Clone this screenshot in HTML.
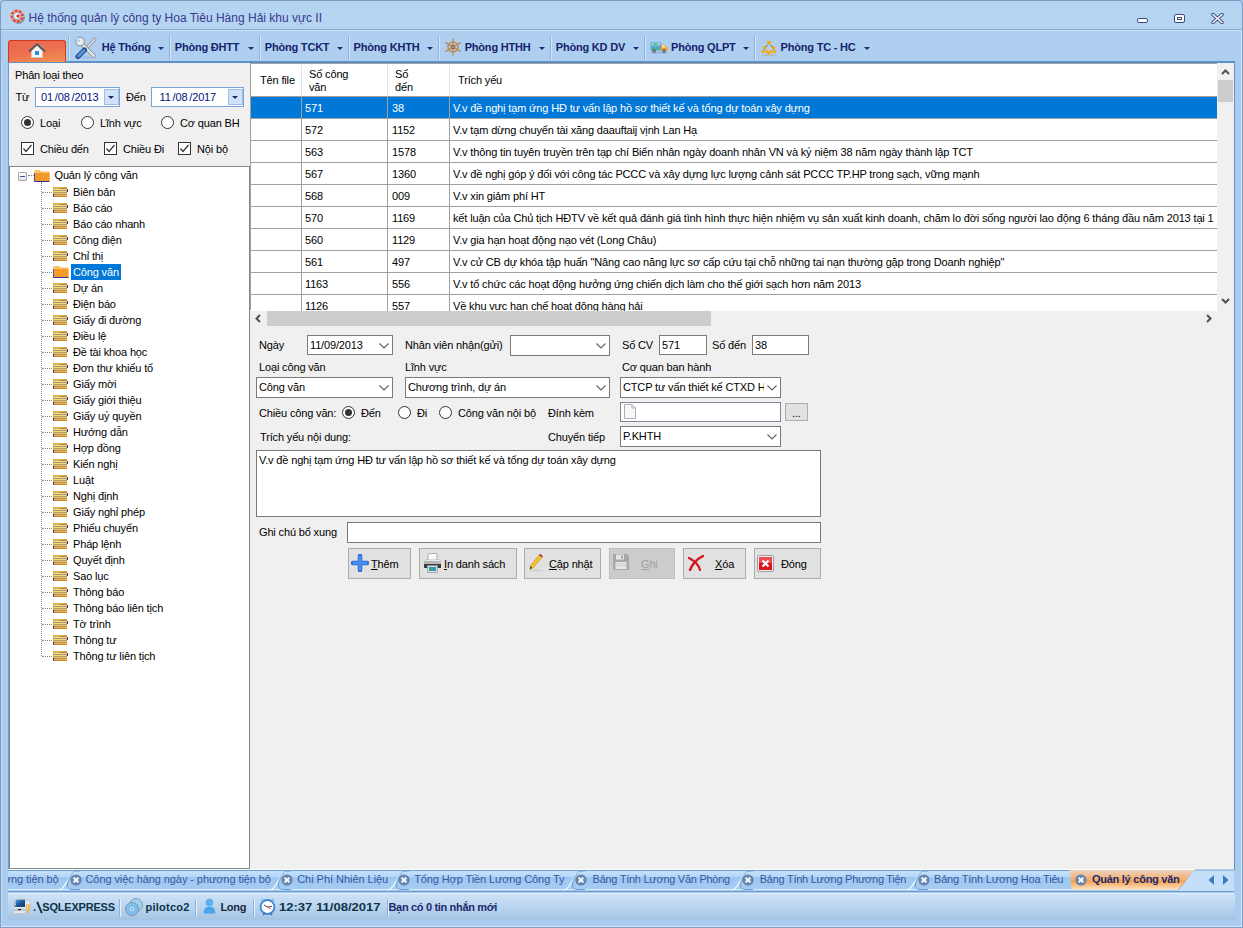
<!DOCTYPE html><html><head><meta charset="utf-8"><style>
*{box-sizing:border-box;margin:0;padding:0}
html,body{width:1243px;height:928px;overflow:hidden}
body{position:relative;background:#aacdef;font-family:"Liberation Sans",sans-serif;font-size:11px;color:#000}
.a{position:absolute}
.t{position:absolute;white-space:nowrap;line-height:14px;letter-spacing:-0.15px}
.mi{position:absolute;top:40px;font-weight:bold;font-size:11px;color:#17236c;line-height:14px;letter-spacing:-0.2px;white-space:nowrap}
.sep{position:absolute;top:36px;width:1px;height:24px;background:#8eb3dc;box-shadow:1px 0 0 #d3e6f8}
.arr{position:absolute;top:47px;width:0;height:0;border-left:3px solid transparent;border-right:3px solid transparent;border-top:3px solid #1c2c76}
.rad{position:absolute;width:13px;height:13px;border-radius:50%;border:1px solid #333;background:#fff}
.rad.on::after{content:"";position:absolute;left:2px;top:2px;width:7px;height:7px;border-radius:50%;background:#333}
.chk{position:absolute;width:13px;height:13px;border:1px solid #333;background:#fff}
.inp{position:absolute;background:#fff;border:1px solid #7a7a7a}
.btn{position:absolute;background:#e1e1e1;border:1px solid #adadad}
.gl{position:absolute;background:#a0a0a0}
</style></head><body>
<div class="a" style="left:0;top:0;width:1243px;height:928px;border:1px solid #7f9cc0;border-radius:4px 4px 0 0"></div>
<div class="a" style="left:1241px;top:30px;width:1px;height:897px;background:#cfe7fb"></div>
<div class="a" style="left:1px;top:926px;width:1241px;height:1px;background:#cfe7fb"></div>
<div class="a" style="left:1px;top:30px;width:1px;height:896px;background:#c0dcf6"></div>
<div class="a" style="left:1px;top:1px;width:1241px;height:28px;background:#b5d4f1;border-radius:5px 5px 0 0"></div>
<div class="a" style="left:1px;top:29px;width:1241px;height:1px;background:#86a6cc"></div>
<div class="a" style="left:2px;top:30px;width:1239px;height:1px;background:#c8e2f9"></div>
<svg class="a" style="left:10px;top:9px" width="16" height="16" viewBox="0 0 16 16">
<circle cx="7.8" cy="7.8" r="6.3" fill="#222" opacity="0.35" transform="translate(0.8,0.8)"/>
<circle cx="7" cy="7" r="5.4" fill="#f0f4f8" stroke="#f0304a" stroke-width="2.2"/>
<circle cx="7" cy="7" r="5.4" fill="none" stroke="#f5e040" stroke-width="2.2" stroke-dasharray="1.2 3.04"/>
<circle cx="7" cy="7" r="3.6" fill="#f4eef2" stroke="#4a90b8" stroke-width="0.8"/>
<circle cx="8" cy="7" r="1.5" fill="#f01818"/></svg>
<div class="t" style="left:28.5px;top:11px;font-size:12px;color:#38388e;letter-spacing:0">Hệ thống quản lý công ty Hoa Tiêu Hàng Hải khu vực II</div>
<div class="a" style="left:1137px;top:18px;width:11px;height:5px;background:#fff;border:1px solid #3b4c7c;border-radius:2px"></div>
<div class="a" style="left:1174px;top:14px;width:11px;height:9px;background:#fff;border:1px solid #3b4c7c;border-radius:2px"></div>
<div class="a" style="left:1177px;top:17px;width:5px;height:3px;background:#fff;border:1px solid #3b4c7c"></div>
<svg class="a" style="left:1211px;top:13px" width="13" height="11" viewBox="0 0 13 11">
<path d="M2 1.5 L11 9.5 M11 1.5 L2 9.5" stroke="#3b4c7c" stroke-width="3.4" stroke-linecap="round"/>
<path d="M2 1.5 L11 9.5 M11 1.5 L2 9.5" stroke="#fff" stroke-width="1.6" stroke-linecap="round"/></svg>
<div class="a" style="left:1px;top:31px;width:1240px;height:31px;background:#aecff0"></div>
<div class="a" style="left:8px;top:62px;width:1227px;height:808px;background:#f0f0f0"></div>
<div class="a" style="left:8px;top:61px;width:1227px;height:2px;background:#5f90ca;border-radius:0 3px 0 0"></div>
<div class="a" style="left:8px;top:61px;width:1px;height:809px;background:#6d9bd2"></div>
<div class="a" style="left:1234px;top:61px;width:1px;height:809px;background:#5f90ca"></div>
<div class="a" style="left:8px;top:40px;width:58px;height:22px;border-radius:3px 3px 0 0;background:linear-gradient(170deg,#ea6652,#ec6e50 45%,#f29450);border:1px solid #cf3a1a;border-bottom:none"></div>
<svg class="a" style="left:28px;top:43px" width="18" height="16" viewBox="0 0 18 16">
<rect x="12" y="2.5" width="3" height="4" fill="#9aa0a8"/>
<path d="M3.5 8 L9 2.8 L14.5 8 L14.5 15 L3.5 15 Z" fill="#f8f8f8"/>
<path d="M3.5 14.5 H14.5" stroke="#c8c8c8"/>
<path d="M1 8.5 L9 1.2 L17 8.5" stroke="#505860" stroke-width="1.8" fill="none" stroke-linejoin="round"/>
<rect x="7" y="8" width="4" height="4" fill="#2a8ae8"/></svg>
<div class="sep" style="left:68px"></div>
<div class="sep" style="left:169px"></div>
<div class="sep" style="left:259px"></div>
<div class="sep" style="left:348px"></div>
<div class="sep" style="left:438px"></div>
<div class="sep" style="left:550px"></div>
<div class="sep" style="left:644px"></div>
<div class="sep" style="left:754px"></div>
<div class="mi" style="left:101.7px">Hệ Thống</div>
<div class="arr" style="left:158px"></div>
<div class="mi" style="left:174.8px">Phòng ĐHTT</div>
<div class="arr" style="left:248px"></div>
<div class="mi" style="left:264.8px">Phòng TCKT</div>
<div class="arr" style="left:337px"></div>
<div class="mi" style="left:353.6px">Phòng KHTH</div>
<div class="arr" style="left:427px"></div>
<div class="mi" style="left:464.7px">Phòng HTHH</div>
<div class="arr" style="left:539px"></div>
<div class="mi" style="left:555.8px">Phòng KD DV</div>
<div class="arr" style="left:633px"></div>
<div class="mi" style="left:671px">Phòng QLPT</div>
<div class="arr" style="left:743px"></div>
<div class="mi" style="left:780.6px">Phòng TC - HC</div>
<div class="arr" style="left:864px"></div>
<svg class="a" style="left:75px;top:36px" width="22" height="23" viewBox="0 0 22 23">
<ellipse cx="11" cy="21.5" rx="9" ry="1.2" fill="#9ab8d8" opacity="0.6"/>
<path d="M20 3 L9 15" stroke="#8a8a8a" stroke-width="2.8" stroke-linecap="round"/>
<path d="M20 3 L9 15" stroke="#e8e8e8" stroke-width="1.4" stroke-linecap="round"/>
<path d="M5 6 L19 20" stroke="#8c8c8c" stroke-width="3.8" stroke-linecap="round"/>
<path d="M5 6 L19 20" stroke="#ededed" stroke-width="2.2" stroke-linecap="round"/>
<circle cx="5" cy="5.5" r="4.3" fill="#ededed" stroke="#8c8c8c" stroke-width="1"/>
<path d="M1.5 1 L5 4.5 L3.5 6.5 L0 3 Z" fill="#aecff0"/>
<path d="M9.5 14 L3 20.5" stroke="#24508c" stroke-width="5" stroke-linecap="round"/>
<path d="M9 14.5 L3.5 20" stroke="#5a96d8" stroke-width="2.6" stroke-linecap="round"/>
</svg>
<svg class="a" style="left:444px;top:38px" width="18" height="18" viewBox="0 0 18 18">
<g stroke="#b8865a" stroke-width="1.3" stroke-linecap="round"><path d="M9 0.8 V17.2 M1.8 4.6 L16.2 13.4 M16.2 4.6 L1.8 13.4"/></g>
<circle cx="9" cy="9" r="5" fill="none" stroke="#c08a58" stroke-width="1.6"/>
<circle cx="9" cy="9" r="2.2" fill="#9a6438"/><circle cx="9" cy="9" r="1" fill="#a8b890"/></svg>
<svg class="a" style="left:650px;top:41px" width="18" height="13" viewBox="0 0 18 13">
<ellipse cx="9" cy="11.8" rx="8.5" ry="1" fill="#8aa8c8" opacity="0.6"/>
<rect x="0.5" y="1" width="10.5" height="8.5" rx="1" fill="#5aa6d6"/>
<rect x="1.2" y="1.6" width="9" height="3" fill="#9ad0f0"/>
<path d="M11 3.5 L14.5 3.5 L17.5 7 L17.5 9.5 L11 9.5 Z" fill="#f5a020"/>
<path d="M12 4.3 L14 4.3 L16 6.8 L12 6.8 Z" fill="#fde0a0"/>
<path d="M3.5 4.5 A2.3 2.3 0 0 1 7.5 4 M7.8 6.5 A2.3 2.3 0 0 1 3.8 7" stroke="#3cc040" stroke-width="1.2" fill="none"/>
<circle cx="4" cy="10" r="1.8" fill="#404040"/><circle cx="4" cy="10" r="0.8" fill="#e0e0e0"/>
<circle cx="14" cy="10" r="1.8" fill="#404040"/><circle cx="14" cy="10" r="0.8" fill="#e0e0e0"/></svg>
<svg class="a" style="left:761px;top:40px" width="16" height="16" viewBox="0 0 16 16">
<ellipse cx="8" cy="15" rx="7.5" ry="0.9" fill="#b8b8b8"/>
<path d="M8 3 L3.5 7.5 L2 11.5 M8 3 L12.5 7.5 L14 11.5 M3.5 7.5 L5.5 11.5 M12.5 7.5 L10.5 11.5 M8 9 L6.5 13.5 M8 9 L9.5 13.5" stroke="#f0c878" stroke-width="0.7"/>
<rect x="6.3" y="1" width="3.4" height="3.2" fill="#f5a800"/>
<circle cx="3.5" cy="7.5" r="1.6" fill="#f5a800"/><circle cx="12.5" cy="7.5" r="1.6" fill="#f5a800"/>
<circle cx="2" cy="11.5" r="1.5" fill="#f5a800"/><circle cx="5.5" cy="11.5" r="1.5" fill="#f5a800"/>
<circle cx="10.5" cy="11.5" r="1.5" fill="#f5a800"/><circle cx="14" cy="11.5" r="1.5" fill="#f5a800"/>
<circle cx="8" cy="13" r="1.4" fill="#f5a800"/></svg>
<div class="t" style="left:15px;top:68px">Phân loại theo</div>
<div class="t" style="left:15.5px;top:90px">Từ</div>
<div class="t" style="left:126px;top:90px">Đến</div>
<div class="a" style="left:35px;top:87px;width:85px;height:20px;background:#fff;border:1px solid #7aa3d8"></div>
<div class="t" style="left:41px;top:90px;color:#00107e;word-spacing:-1px">01 /08 /2013</div>
<div class="a" style="left:104px;top:89px;width:15px;height:16px;background:#cfe2f7;border:1px solid #9bbde6"></div>
<div class="a" style="left:108px;top:96px;width:0;height:0;border-left:3.5px solid transparent;border-right:3.5px solid transparent;border-top:3.5px solid #1a2a60"></div>
<div class="a" style="left:151px;top:87px;width:93px;height:20px;background:#fff;border:1px solid #7aa3d8"></div>
<div class="t" style="left:159.5px;top:90px;color:#00107e;word-spacing:-1px">11 /08 /2017</div>
<div class="a" style="left:228px;top:89px;width:15px;height:16px;background:#cfe2f7;border:1px solid #9bbde6"></div>
<div class="a" style="left:232px;top:96px;width:0;height:0;border-left:3.5px solid transparent;border-right:3.5px solid transparent;border-top:3.5px solid #1a2a60"></div>
<div class="rad on" style="left:21px;top:116px"></div><div class="t" style="left:40px;top:116px">Loại</div>
<div class="rad" style="left:81px;top:116px"></div><div class="t" style="left:100px;top:116px">Lĩnh vực</div>
<div class="rad" style="left:161px;top:116px"></div><div class="t" style="left:180px;top:116px">Cơ quan BH</div>
<svg class="a" style="left:21px;top:142px" width="13" height="13" viewBox="0 0 13 13"><rect x="0.5" y="0.5" width="12" height="12" fill="#fff" stroke="#333"/><path d="M2.5 6.5 L5 9.5 L10.5 3" stroke="#333" stroke-width="1.2" fill="none"/></svg>
<div class="t" style="left:40px;top:142px">Chiều đến</div>
<svg class="a" style="left:104px;top:142px" width="13" height="13" viewBox="0 0 13 13"><rect x="0.5" y="0.5" width="12" height="12" fill="#fff" stroke="#333"/><path d="M2.5 6.5 L5 9.5 L10.5 3" stroke="#333" stroke-width="1.2" fill="none"/></svg>
<div class="t" style="left:123px;top:142px">Chiều Đi</div>
<svg class="a" style="left:178px;top:142px" width="13" height="13" viewBox="0 0 13 13"><rect x="0.5" y="0.5" width="12" height="12" fill="#fff" stroke="#333"/><path d="M2.5 6.5 L5 9.5 L10.5 3" stroke="#333" stroke-width="1.2" fill="none"/></svg>
<div class="t" style="left:197px;top:142px">Nội bộ</div>
<div class="a" style="left:9px;top:166px;width:241px;height:703px;background:#fff;border:1px solid #828790"></div>
<div class="a" style="left:18px;top:172px;width:9px;height:9px;border:1px solid #a8a8a8;border-radius:1px;background:linear-gradient(#fff,#e4e4e4)"></div>
<div class="a" style="left:20px;top:176px;width:5px;height:1px;background:#3050c0"></div>
<div class="a" style="left:28px;top:175px;width:6px;height:0;border-top:1px dotted #888"></div>
<svg class="a" style="left:34px;top:169px" width="16" height="13" viewBox="0 0 16 13"><path d="M0.5 1 L6 1 L7 2.5 L15.5 2.5 L15.5 12.5 L0.5 12.5 Z" fill="#f8c060"/><rect x="0.5" y="4" width="15" height="8.5" fill="#f59a2a"/><path d="M0.5 12.5 L15.5 12.5" stroke="#3030a0"/><path d="M0.5 4 L0.5 12.5" stroke="#3030a0" stroke-width="0.8"/></svg>
<div class="t" style="left:54.5px;top:168px">Quản lý công văn</div>
<div class="a" style="left:41px;top:182px;width:0;height:474px;border-left:1px dotted #888"></div>
<div class="a" style="left:42px;top:192px;width:10px;height:0;border-top:1px dotted #888"></div>
<svg class="a" style="left:53px;top:187px" width="15" height="11" viewBox="0 0 15 11"><rect x="0" y="0" width="14" height="10" fill="#e8b040"/><rect x="1" y="1" width="6" height="1" fill="#c8b890"/><rect x="7" y="1" width="7" height="1" fill="#b88838"/><rect x="1" y="2" width="13" height="1" fill="#f2d888"/><rect x="1" y="3" width="13" height="1" fill="#b0a078"/><rect x="1" y="4" width="13" height="1" fill="#f2d27c"/><rect x="1" y="5" width="13" height="1" fill="#b0a070"/><rect x="1" y="6" width="13" height="1" fill="#ecbc58"/><rect x="1" y="7" width="13" height="1" fill="#b09850"/><rect x="1" y="8" width="13" height="1" fill="#ecb450"/><rect x="1" y="9" width="13" height="1" fill="#c88838"/><rect x="0" y="7" width="1" height="3" fill="#3838b0"/><rect x="14" y="2" width="1" height="3" fill="#2828a0"/></svg>
<div class="t" style="left:73px;top:185px">Biên bản</div>
<div class="a" style="left:42px;top:208px;width:10px;height:0;border-top:1px dotted #888"></div>
<svg class="a" style="left:53px;top:203px" width="15" height="11" viewBox="0 0 15 11"><rect x="0" y="0" width="14" height="10" fill="#e8b040"/><rect x="1" y="1" width="6" height="1" fill="#c8b890"/><rect x="7" y="1" width="7" height="1" fill="#b88838"/><rect x="1" y="2" width="13" height="1" fill="#f2d888"/><rect x="1" y="3" width="13" height="1" fill="#b0a078"/><rect x="1" y="4" width="13" height="1" fill="#f2d27c"/><rect x="1" y="5" width="13" height="1" fill="#b0a070"/><rect x="1" y="6" width="13" height="1" fill="#ecbc58"/><rect x="1" y="7" width="13" height="1" fill="#b09850"/><rect x="1" y="8" width="13" height="1" fill="#ecb450"/><rect x="1" y="9" width="13" height="1" fill="#c88838"/><rect x="0" y="7" width="1" height="3" fill="#3838b0"/><rect x="14" y="2" width="1" height="3" fill="#2828a0"/></svg>
<div class="t" style="left:73px;top:201px">Báo cáo</div>
<div class="a" style="left:42px;top:224px;width:10px;height:0;border-top:1px dotted #888"></div>
<svg class="a" style="left:53px;top:219px" width="15" height="11" viewBox="0 0 15 11"><rect x="0" y="0" width="14" height="10" fill="#e8b040"/><rect x="1" y="1" width="6" height="1" fill="#c8b890"/><rect x="7" y="1" width="7" height="1" fill="#b88838"/><rect x="1" y="2" width="13" height="1" fill="#f2d888"/><rect x="1" y="3" width="13" height="1" fill="#b0a078"/><rect x="1" y="4" width="13" height="1" fill="#f2d27c"/><rect x="1" y="5" width="13" height="1" fill="#b0a070"/><rect x="1" y="6" width="13" height="1" fill="#ecbc58"/><rect x="1" y="7" width="13" height="1" fill="#b09850"/><rect x="1" y="8" width="13" height="1" fill="#ecb450"/><rect x="1" y="9" width="13" height="1" fill="#c88838"/><rect x="0" y="7" width="1" height="3" fill="#3838b0"/><rect x="14" y="2" width="1" height="3" fill="#2828a0"/></svg>
<div class="t" style="left:73px;top:217px">Báo cáo nhanh</div>
<div class="a" style="left:42px;top:240px;width:10px;height:0;border-top:1px dotted #888"></div>
<svg class="a" style="left:53px;top:235px" width="15" height="11" viewBox="0 0 15 11"><rect x="0" y="0" width="14" height="10" fill="#e8b040"/><rect x="1" y="1" width="6" height="1" fill="#c8b890"/><rect x="7" y="1" width="7" height="1" fill="#b88838"/><rect x="1" y="2" width="13" height="1" fill="#f2d888"/><rect x="1" y="3" width="13" height="1" fill="#b0a078"/><rect x="1" y="4" width="13" height="1" fill="#f2d27c"/><rect x="1" y="5" width="13" height="1" fill="#b0a070"/><rect x="1" y="6" width="13" height="1" fill="#ecbc58"/><rect x="1" y="7" width="13" height="1" fill="#b09850"/><rect x="1" y="8" width="13" height="1" fill="#ecb450"/><rect x="1" y="9" width="13" height="1" fill="#c88838"/><rect x="0" y="7" width="1" height="3" fill="#3838b0"/><rect x="14" y="2" width="1" height="3" fill="#2828a0"/></svg>
<div class="t" style="left:73px;top:233px">Công điện</div>
<div class="a" style="left:42px;top:256px;width:10px;height:0;border-top:1px dotted #888"></div>
<svg class="a" style="left:53px;top:251px" width="15" height="11" viewBox="0 0 15 11"><rect x="0" y="0" width="14" height="10" fill="#e8b040"/><rect x="1" y="1" width="6" height="1" fill="#c8b890"/><rect x="7" y="1" width="7" height="1" fill="#b88838"/><rect x="1" y="2" width="13" height="1" fill="#f2d888"/><rect x="1" y="3" width="13" height="1" fill="#b0a078"/><rect x="1" y="4" width="13" height="1" fill="#f2d27c"/><rect x="1" y="5" width="13" height="1" fill="#b0a070"/><rect x="1" y="6" width="13" height="1" fill="#ecbc58"/><rect x="1" y="7" width="13" height="1" fill="#b09850"/><rect x="1" y="8" width="13" height="1" fill="#ecb450"/><rect x="1" y="9" width="13" height="1" fill="#c88838"/><rect x="0" y="7" width="1" height="3" fill="#3838b0"/><rect x="14" y="2" width="1" height="3" fill="#2828a0"/></svg>
<div class="t" style="left:73px;top:249px">Chỉ thị</div>
<div class="a" style="left:42px;top:272px;width:10px;height:0;border-top:1px dotted #888"></div>
<svg class="a" style="left:53px;top:265px" width="16" height="13" viewBox="0 0 16 13"><path d="M0.5 1 L6 1 L7 2.5 L15.5 2.5 L15.5 12.5 L0.5 12.5 Z" fill="#f8c060"/><rect x="0.5" y="4" width="15" height="8.5" fill="#f59a2a"/><path d="M0.5 12.5 L15.5 12.5" stroke="#3030a0"/><path d="M0.5 4 L0.5 12.5" stroke="#3030a0" stroke-width="0.8"/></svg>
<div class="a" style="left:71px;top:264px;width:50px;height:16px;background:#0078d7"></div>
<div class="t" style="left:73px;top:265px;color:#fff">Công văn</div>
<div class="a" style="left:42px;top:288px;width:10px;height:0;border-top:1px dotted #888"></div>
<svg class="a" style="left:53px;top:283px" width="15" height="11" viewBox="0 0 15 11"><rect x="0" y="0" width="14" height="10" fill="#e8b040"/><rect x="1" y="1" width="6" height="1" fill="#c8b890"/><rect x="7" y="1" width="7" height="1" fill="#b88838"/><rect x="1" y="2" width="13" height="1" fill="#f2d888"/><rect x="1" y="3" width="13" height="1" fill="#b0a078"/><rect x="1" y="4" width="13" height="1" fill="#f2d27c"/><rect x="1" y="5" width="13" height="1" fill="#b0a070"/><rect x="1" y="6" width="13" height="1" fill="#ecbc58"/><rect x="1" y="7" width="13" height="1" fill="#b09850"/><rect x="1" y="8" width="13" height="1" fill="#ecb450"/><rect x="1" y="9" width="13" height="1" fill="#c88838"/><rect x="0" y="7" width="1" height="3" fill="#3838b0"/><rect x="14" y="2" width="1" height="3" fill="#2828a0"/></svg>
<div class="t" style="left:73px;top:281px">Dự án</div>
<div class="a" style="left:42px;top:304px;width:10px;height:0;border-top:1px dotted #888"></div>
<svg class="a" style="left:53px;top:299px" width="15" height="11" viewBox="0 0 15 11"><rect x="0" y="0" width="14" height="10" fill="#e8b040"/><rect x="1" y="1" width="6" height="1" fill="#c8b890"/><rect x="7" y="1" width="7" height="1" fill="#b88838"/><rect x="1" y="2" width="13" height="1" fill="#f2d888"/><rect x="1" y="3" width="13" height="1" fill="#b0a078"/><rect x="1" y="4" width="13" height="1" fill="#f2d27c"/><rect x="1" y="5" width="13" height="1" fill="#b0a070"/><rect x="1" y="6" width="13" height="1" fill="#ecbc58"/><rect x="1" y="7" width="13" height="1" fill="#b09850"/><rect x="1" y="8" width="13" height="1" fill="#ecb450"/><rect x="1" y="9" width="13" height="1" fill="#c88838"/><rect x="0" y="7" width="1" height="3" fill="#3838b0"/><rect x="14" y="2" width="1" height="3" fill="#2828a0"/></svg>
<div class="t" style="left:73px;top:297px">Điện báo</div>
<div class="a" style="left:42px;top:320px;width:10px;height:0;border-top:1px dotted #888"></div>
<svg class="a" style="left:53px;top:315px" width="15" height="11" viewBox="0 0 15 11"><rect x="0" y="0" width="14" height="10" fill="#e8b040"/><rect x="1" y="1" width="6" height="1" fill="#c8b890"/><rect x="7" y="1" width="7" height="1" fill="#b88838"/><rect x="1" y="2" width="13" height="1" fill="#f2d888"/><rect x="1" y="3" width="13" height="1" fill="#b0a078"/><rect x="1" y="4" width="13" height="1" fill="#f2d27c"/><rect x="1" y="5" width="13" height="1" fill="#b0a070"/><rect x="1" y="6" width="13" height="1" fill="#ecbc58"/><rect x="1" y="7" width="13" height="1" fill="#b09850"/><rect x="1" y="8" width="13" height="1" fill="#ecb450"/><rect x="1" y="9" width="13" height="1" fill="#c88838"/><rect x="0" y="7" width="1" height="3" fill="#3838b0"/><rect x="14" y="2" width="1" height="3" fill="#2828a0"/></svg>
<div class="t" style="left:73px;top:313px">Giấy đi đường</div>
<div class="a" style="left:42px;top:336px;width:10px;height:0;border-top:1px dotted #888"></div>
<svg class="a" style="left:53px;top:331px" width="15" height="11" viewBox="0 0 15 11"><rect x="0" y="0" width="14" height="10" fill="#e8b040"/><rect x="1" y="1" width="6" height="1" fill="#c8b890"/><rect x="7" y="1" width="7" height="1" fill="#b88838"/><rect x="1" y="2" width="13" height="1" fill="#f2d888"/><rect x="1" y="3" width="13" height="1" fill="#b0a078"/><rect x="1" y="4" width="13" height="1" fill="#f2d27c"/><rect x="1" y="5" width="13" height="1" fill="#b0a070"/><rect x="1" y="6" width="13" height="1" fill="#ecbc58"/><rect x="1" y="7" width="13" height="1" fill="#b09850"/><rect x="1" y="8" width="13" height="1" fill="#ecb450"/><rect x="1" y="9" width="13" height="1" fill="#c88838"/><rect x="0" y="7" width="1" height="3" fill="#3838b0"/><rect x="14" y="2" width="1" height="3" fill="#2828a0"/></svg>
<div class="t" style="left:73px;top:329px">Điều lệ</div>
<div class="a" style="left:42px;top:352px;width:10px;height:0;border-top:1px dotted #888"></div>
<svg class="a" style="left:53px;top:347px" width="15" height="11" viewBox="0 0 15 11"><rect x="0" y="0" width="14" height="10" fill="#e8b040"/><rect x="1" y="1" width="6" height="1" fill="#c8b890"/><rect x="7" y="1" width="7" height="1" fill="#b88838"/><rect x="1" y="2" width="13" height="1" fill="#f2d888"/><rect x="1" y="3" width="13" height="1" fill="#b0a078"/><rect x="1" y="4" width="13" height="1" fill="#f2d27c"/><rect x="1" y="5" width="13" height="1" fill="#b0a070"/><rect x="1" y="6" width="13" height="1" fill="#ecbc58"/><rect x="1" y="7" width="13" height="1" fill="#b09850"/><rect x="1" y="8" width="13" height="1" fill="#ecb450"/><rect x="1" y="9" width="13" height="1" fill="#c88838"/><rect x="0" y="7" width="1" height="3" fill="#3838b0"/><rect x="14" y="2" width="1" height="3" fill="#2828a0"/></svg>
<div class="t" style="left:73px;top:345px">Đề tài khoa học</div>
<div class="a" style="left:42px;top:368px;width:10px;height:0;border-top:1px dotted #888"></div>
<svg class="a" style="left:53px;top:363px" width="15" height="11" viewBox="0 0 15 11"><rect x="0" y="0" width="14" height="10" fill="#e8b040"/><rect x="1" y="1" width="6" height="1" fill="#c8b890"/><rect x="7" y="1" width="7" height="1" fill="#b88838"/><rect x="1" y="2" width="13" height="1" fill="#f2d888"/><rect x="1" y="3" width="13" height="1" fill="#b0a078"/><rect x="1" y="4" width="13" height="1" fill="#f2d27c"/><rect x="1" y="5" width="13" height="1" fill="#b0a070"/><rect x="1" y="6" width="13" height="1" fill="#ecbc58"/><rect x="1" y="7" width="13" height="1" fill="#b09850"/><rect x="1" y="8" width="13" height="1" fill="#ecb450"/><rect x="1" y="9" width="13" height="1" fill="#c88838"/><rect x="0" y="7" width="1" height="3" fill="#3838b0"/><rect x="14" y="2" width="1" height="3" fill="#2828a0"/></svg>
<div class="t" style="left:73px;top:361px">Đơn thư khiếu tố</div>
<div class="a" style="left:42px;top:384px;width:10px;height:0;border-top:1px dotted #888"></div>
<svg class="a" style="left:53px;top:379px" width="15" height="11" viewBox="0 0 15 11"><rect x="0" y="0" width="14" height="10" fill="#e8b040"/><rect x="1" y="1" width="6" height="1" fill="#c8b890"/><rect x="7" y="1" width="7" height="1" fill="#b88838"/><rect x="1" y="2" width="13" height="1" fill="#f2d888"/><rect x="1" y="3" width="13" height="1" fill="#b0a078"/><rect x="1" y="4" width="13" height="1" fill="#f2d27c"/><rect x="1" y="5" width="13" height="1" fill="#b0a070"/><rect x="1" y="6" width="13" height="1" fill="#ecbc58"/><rect x="1" y="7" width="13" height="1" fill="#b09850"/><rect x="1" y="8" width="13" height="1" fill="#ecb450"/><rect x="1" y="9" width="13" height="1" fill="#c88838"/><rect x="0" y="7" width="1" height="3" fill="#3838b0"/><rect x="14" y="2" width="1" height="3" fill="#2828a0"/></svg>
<div class="t" style="left:73px;top:377px">Giấy mời</div>
<div class="a" style="left:42px;top:400px;width:10px;height:0;border-top:1px dotted #888"></div>
<svg class="a" style="left:53px;top:395px" width="15" height="11" viewBox="0 0 15 11"><rect x="0" y="0" width="14" height="10" fill="#e8b040"/><rect x="1" y="1" width="6" height="1" fill="#c8b890"/><rect x="7" y="1" width="7" height="1" fill="#b88838"/><rect x="1" y="2" width="13" height="1" fill="#f2d888"/><rect x="1" y="3" width="13" height="1" fill="#b0a078"/><rect x="1" y="4" width="13" height="1" fill="#f2d27c"/><rect x="1" y="5" width="13" height="1" fill="#b0a070"/><rect x="1" y="6" width="13" height="1" fill="#ecbc58"/><rect x="1" y="7" width="13" height="1" fill="#b09850"/><rect x="1" y="8" width="13" height="1" fill="#ecb450"/><rect x="1" y="9" width="13" height="1" fill="#c88838"/><rect x="0" y="7" width="1" height="3" fill="#3838b0"/><rect x="14" y="2" width="1" height="3" fill="#2828a0"/></svg>
<div class="t" style="left:73px;top:393px">Giấy giới thiệu</div>
<div class="a" style="left:42px;top:416px;width:10px;height:0;border-top:1px dotted #888"></div>
<svg class="a" style="left:53px;top:411px" width="15" height="11" viewBox="0 0 15 11"><rect x="0" y="0" width="14" height="10" fill="#e8b040"/><rect x="1" y="1" width="6" height="1" fill="#c8b890"/><rect x="7" y="1" width="7" height="1" fill="#b88838"/><rect x="1" y="2" width="13" height="1" fill="#f2d888"/><rect x="1" y="3" width="13" height="1" fill="#b0a078"/><rect x="1" y="4" width="13" height="1" fill="#f2d27c"/><rect x="1" y="5" width="13" height="1" fill="#b0a070"/><rect x="1" y="6" width="13" height="1" fill="#ecbc58"/><rect x="1" y="7" width="13" height="1" fill="#b09850"/><rect x="1" y="8" width="13" height="1" fill="#ecb450"/><rect x="1" y="9" width="13" height="1" fill="#c88838"/><rect x="0" y="7" width="1" height="3" fill="#3838b0"/><rect x="14" y="2" width="1" height="3" fill="#2828a0"/></svg>
<div class="t" style="left:73px;top:409px">Giấy uỷ quyền</div>
<div class="a" style="left:42px;top:432px;width:10px;height:0;border-top:1px dotted #888"></div>
<svg class="a" style="left:53px;top:427px" width="15" height="11" viewBox="0 0 15 11"><rect x="0" y="0" width="14" height="10" fill="#e8b040"/><rect x="1" y="1" width="6" height="1" fill="#c8b890"/><rect x="7" y="1" width="7" height="1" fill="#b88838"/><rect x="1" y="2" width="13" height="1" fill="#f2d888"/><rect x="1" y="3" width="13" height="1" fill="#b0a078"/><rect x="1" y="4" width="13" height="1" fill="#f2d27c"/><rect x="1" y="5" width="13" height="1" fill="#b0a070"/><rect x="1" y="6" width="13" height="1" fill="#ecbc58"/><rect x="1" y="7" width="13" height="1" fill="#b09850"/><rect x="1" y="8" width="13" height="1" fill="#ecb450"/><rect x="1" y="9" width="13" height="1" fill="#c88838"/><rect x="0" y="7" width="1" height="3" fill="#3838b0"/><rect x="14" y="2" width="1" height="3" fill="#2828a0"/></svg>
<div class="t" style="left:73px;top:425px">Hướng dẫn</div>
<div class="a" style="left:42px;top:448px;width:10px;height:0;border-top:1px dotted #888"></div>
<svg class="a" style="left:53px;top:443px" width="15" height="11" viewBox="0 0 15 11"><rect x="0" y="0" width="14" height="10" fill="#e8b040"/><rect x="1" y="1" width="6" height="1" fill="#c8b890"/><rect x="7" y="1" width="7" height="1" fill="#b88838"/><rect x="1" y="2" width="13" height="1" fill="#f2d888"/><rect x="1" y="3" width="13" height="1" fill="#b0a078"/><rect x="1" y="4" width="13" height="1" fill="#f2d27c"/><rect x="1" y="5" width="13" height="1" fill="#b0a070"/><rect x="1" y="6" width="13" height="1" fill="#ecbc58"/><rect x="1" y="7" width="13" height="1" fill="#b09850"/><rect x="1" y="8" width="13" height="1" fill="#ecb450"/><rect x="1" y="9" width="13" height="1" fill="#c88838"/><rect x="0" y="7" width="1" height="3" fill="#3838b0"/><rect x="14" y="2" width="1" height="3" fill="#2828a0"/></svg>
<div class="t" style="left:73px;top:441px">Hợp đồng</div>
<div class="a" style="left:42px;top:464px;width:10px;height:0;border-top:1px dotted #888"></div>
<svg class="a" style="left:53px;top:459px" width="15" height="11" viewBox="0 0 15 11"><rect x="0" y="0" width="14" height="10" fill="#e8b040"/><rect x="1" y="1" width="6" height="1" fill="#c8b890"/><rect x="7" y="1" width="7" height="1" fill="#b88838"/><rect x="1" y="2" width="13" height="1" fill="#f2d888"/><rect x="1" y="3" width="13" height="1" fill="#b0a078"/><rect x="1" y="4" width="13" height="1" fill="#f2d27c"/><rect x="1" y="5" width="13" height="1" fill="#b0a070"/><rect x="1" y="6" width="13" height="1" fill="#ecbc58"/><rect x="1" y="7" width="13" height="1" fill="#b09850"/><rect x="1" y="8" width="13" height="1" fill="#ecb450"/><rect x="1" y="9" width="13" height="1" fill="#c88838"/><rect x="0" y="7" width="1" height="3" fill="#3838b0"/><rect x="14" y="2" width="1" height="3" fill="#2828a0"/></svg>
<div class="t" style="left:73px;top:457px">Kiến nghị</div>
<div class="a" style="left:42px;top:480px;width:10px;height:0;border-top:1px dotted #888"></div>
<svg class="a" style="left:53px;top:475px" width="15" height="11" viewBox="0 0 15 11"><rect x="0" y="0" width="14" height="10" fill="#e8b040"/><rect x="1" y="1" width="6" height="1" fill="#c8b890"/><rect x="7" y="1" width="7" height="1" fill="#b88838"/><rect x="1" y="2" width="13" height="1" fill="#f2d888"/><rect x="1" y="3" width="13" height="1" fill="#b0a078"/><rect x="1" y="4" width="13" height="1" fill="#f2d27c"/><rect x="1" y="5" width="13" height="1" fill="#b0a070"/><rect x="1" y="6" width="13" height="1" fill="#ecbc58"/><rect x="1" y="7" width="13" height="1" fill="#b09850"/><rect x="1" y="8" width="13" height="1" fill="#ecb450"/><rect x="1" y="9" width="13" height="1" fill="#c88838"/><rect x="0" y="7" width="1" height="3" fill="#3838b0"/><rect x="14" y="2" width="1" height="3" fill="#2828a0"/></svg>
<div class="t" style="left:73px;top:473px">Luật</div>
<div class="a" style="left:42px;top:496px;width:10px;height:0;border-top:1px dotted #888"></div>
<svg class="a" style="left:53px;top:491px" width="15" height="11" viewBox="0 0 15 11"><rect x="0" y="0" width="14" height="10" fill="#e8b040"/><rect x="1" y="1" width="6" height="1" fill="#c8b890"/><rect x="7" y="1" width="7" height="1" fill="#b88838"/><rect x="1" y="2" width="13" height="1" fill="#f2d888"/><rect x="1" y="3" width="13" height="1" fill="#b0a078"/><rect x="1" y="4" width="13" height="1" fill="#f2d27c"/><rect x="1" y="5" width="13" height="1" fill="#b0a070"/><rect x="1" y="6" width="13" height="1" fill="#ecbc58"/><rect x="1" y="7" width="13" height="1" fill="#b09850"/><rect x="1" y="8" width="13" height="1" fill="#ecb450"/><rect x="1" y="9" width="13" height="1" fill="#c88838"/><rect x="0" y="7" width="1" height="3" fill="#3838b0"/><rect x="14" y="2" width="1" height="3" fill="#2828a0"/></svg>
<div class="t" style="left:73px;top:489px">Nghị định</div>
<div class="a" style="left:42px;top:512px;width:10px;height:0;border-top:1px dotted #888"></div>
<svg class="a" style="left:53px;top:507px" width="15" height="11" viewBox="0 0 15 11"><rect x="0" y="0" width="14" height="10" fill="#e8b040"/><rect x="1" y="1" width="6" height="1" fill="#c8b890"/><rect x="7" y="1" width="7" height="1" fill="#b88838"/><rect x="1" y="2" width="13" height="1" fill="#f2d888"/><rect x="1" y="3" width="13" height="1" fill="#b0a078"/><rect x="1" y="4" width="13" height="1" fill="#f2d27c"/><rect x="1" y="5" width="13" height="1" fill="#b0a070"/><rect x="1" y="6" width="13" height="1" fill="#ecbc58"/><rect x="1" y="7" width="13" height="1" fill="#b09850"/><rect x="1" y="8" width="13" height="1" fill="#ecb450"/><rect x="1" y="9" width="13" height="1" fill="#c88838"/><rect x="0" y="7" width="1" height="3" fill="#3838b0"/><rect x="14" y="2" width="1" height="3" fill="#2828a0"/></svg>
<div class="t" style="left:73px;top:505px">Giấy nghỉ phép</div>
<div class="a" style="left:42px;top:528px;width:10px;height:0;border-top:1px dotted #888"></div>
<svg class="a" style="left:53px;top:523px" width="15" height="11" viewBox="0 0 15 11"><rect x="0" y="0" width="14" height="10" fill="#e8b040"/><rect x="1" y="1" width="6" height="1" fill="#c8b890"/><rect x="7" y="1" width="7" height="1" fill="#b88838"/><rect x="1" y="2" width="13" height="1" fill="#f2d888"/><rect x="1" y="3" width="13" height="1" fill="#b0a078"/><rect x="1" y="4" width="13" height="1" fill="#f2d27c"/><rect x="1" y="5" width="13" height="1" fill="#b0a070"/><rect x="1" y="6" width="13" height="1" fill="#ecbc58"/><rect x="1" y="7" width="13" height="1" fill="#b09850"/><rect x="1" y="8" width="13" height="1" fill="#ecb450"/><rect x="1" y="9" width="13" height="1" fill="#c88838"/><rect x="0" y="7" width="1" height="3" fill="#3838b0"/><rect x="14" y="2" width="1" height="3" fill="#2828a0"/></svg>
<div class="t" style="left:73px;top:521px">Phiếu chuyển</div>
<div class="a" style="left:42px;top:544px;width:10px;height:0;border-top:1px dotted #888"></div>
<svg class="a" style="left:53px;top:539px" width="15" height="11" viewBox="0 0 15 11"><rect x="0" y="0" width="14" height="10" fill="#e8b040"/><rect x="1" y="1" width="6" height="1" fill="#c8b890"/><rect x="7" y="1" width="7" height="1" fill="#b88838"/><rect x="1" y="2" width="13" height="1" fill="#f2d888"/><rect x="1" y="3" width="13" height="1" fill="#b0a078"/><rect x="1" y="4" width="13" height="1" fill="#f2d27c"/><rect x="1" y="5" width="13" height="1" fill="#b0a070"/><rect x="1" y="6" width="13" height="1" fill="#ecbc58"/><rect x="1" y="7" width="13" height="1" fill="#b09850"/><rect x="1" y="8" width="13" height="1" fill="#ecb450"/><rect x="1" y="9" width="13" height="1" fill="#c88838"/><rect x="0" y="7" width="1" height="3" fill="#3838b0"/><rect x="14" y="2" width="1" height="3" fill="#2828a0"/></svg>
<div class="t" style="left:73px;top:537px">Pháp lệnh</div>
<div class="a" style="left:42px;top:560px;width:10px;height:0;border-top:1px dotted #888"></div>
<svg class="a" style="left:53px;top:555px" width="15" height="11" viewBox="0 0 15 11"><rect x="0" y="0" width="14" height="10" fill="#e8b040"/><rect x="1" y="1" width="6" height="1" fill="#c8b890"/><rect x="7" y="1" width="7" height="1" fill="#b88838"/><rect x="1" y="2" width="13" height="1" fill="#f2d888"/><rect x="1" y="3" width="13" height="1" fill="#b0a078"/><rect x="1" y="4" width="13" height="1" fill="#f2d27c"/><rect x="1" y="5" width="13" height="1" fill="#b0a070"/><rect x="1" y="6" width="13" height="1" fill="#ecbc58"/><rect x="1" y="7" width="13" height="1" fill="#b09850"/><rect x="1" y="8" width="13" height="1" fill="#ecb450"/><rect x="1" y="9" width="13" height="1" fill="#c88838"/><rect x="0" y="7" width="1" height="3" fill="#3838b0"/><rect x="14" y="2" width="1" height="3" fill="#2828a0"/></svg>
<div class="t" style="left:73px;top:553px">Quyết định</div>
<div class="a" style="left:42px;top:576px;width:10px;height:0;border-top:1px dotted #888"></div>
<svg class="a" style="left:53px;top:571px" width="15" height="11" viewBox="0 0 15 11"><rect x="0" y="0" width="14" height="10" fill="#e8b040"/><rect x="1" y="1" width="6" height="1" fill="#c8b890"/><rect x="7" y="1" width="7" height="1" fill="#b88838"/><rect x="1" y="2" width="13" height="1" fill="#f2d888"/><rect x="1" y="3" width="13" height="1" fill="#b0a078"/><rect x="1" y="4" width="13" height="1" fill="#f2d27c"/><rect x="1" y="5" width="13" height="1" fill="#b0a070"/><rect x="1" y="6" width="13" height="1" fill="#ecbc58"/><rect x="1" y="7" width="13" height="1" fill="#b09850"/><rect x="1" y="8" width="13" height="1" fill="#ecb450"/><rect x="1" y="9" width="13" height="1" fill="#c88838"/><rect x="0" y="7" width="1" height="3" fill="#3838b0"/><rect x="14" y="2" width="1" height="3" fill="#2828a0"/></svg>
<div class="t" style="left:73px;top:569px">Sao lục</div>
<div class="a" style="left:42px;top:592px;width:10px;height:0;border-top:1px dotted #888"></div>
<svg class="a" style="left:53px;top:587px" width="15" height="11" viewBox="0 0 15 11"><rect x="0" y="0" width="14" height="10" fill="#e8b040"/><rect x="1" y="1" width="6" height="1" fill="#c8b890"/><rect x="7" y="1" width="7" height="1" fill="#b88838"/><rect x="1" y="2" width="13" height="1" fill="#f2d888"/><rect x="1" y="3" width="13" height="1" fill="#b0a078"/><rect x="1" y="4" width="13" height="1" fill="#f2d27c"/><rect x="1" y="5" width="13" height="1" fill="#b0a070"/><rect x="1" y="6" width="13" height="1" fill="#ecbc58"/><rect x="1" y="7" width="13" height="1" fill="#b09850"/><rect x="1" y="8" width="13" height="1" fill="#ecb450"/><rect x="1" y="9" width="13" height="1" fill="#c88838"/><rect x="0" y="7" width="1" height="3" fill="#3838b0"/><rect x="14" y="2" width="1" height="3" fill="#2828a0"/></svg>
<div class="t" style="left:73px;top:585px">Thông báo</div>
<div class="a" style="left:42px;top:608px;width:10px;height:0;border-top:1px dotted #888"></div>
<svg class="a" style="left:53px;top:603px" width="15" height="11" viewBox="0 0 15 11"><rect x="0" y="0" width="14" height="10" fill="#e8b040"/><rect x="1" y="1" width="6" height="1" fill="#c8b890"/><rect x="7" y="1" width="7" height="1" fill="#b88838"/><rect x="1" y="2" width="13" height="1" fill="#f2d888"/><rect x="1" y="3" width="13" height="1" fill="#b0a078"/><rect x="1" y="4" width="13" height="1" fill="#f2d27c"/><rect x="1" y="5" width="13" height="1" fill="#b0a070"/><rect x="1" y="6" width="13" height="1" fill="#ecbc58"/><rect x="1" y="7" width="13" height="1" fill="#b09850"/><rect x="1" y="8" width="13" height="1" fill="#ecb450"/><rect x="1" y="9" width="13" height="1" fill="#c88838"/><rect x="0" y="7" width="1" height="3" fill="#3838b0"/><rect x="14" y="2" width="1" height="3" fill="#2828a0"/></svg>
<div class="t" style="left:73px;top:601px">Thông báo liên tịch</div>
<div class="a" style="left:42px;top:624px;width:10px;height:0;border-top:1px dotted #888"></div>
<svg class="a" style="left:53px;top:619px" width="15" height="11" viewBox="0 0 15 11"><rect x="0" y="0" width="14" height="10" fill="#e8b040"/><rect x="1" y="1" width="6" height="1" fill="#c8b890"/><rect x="7" y="1" width="7" height="1" fill="#b88838"/><rect x="1" y="2" width="13" height="1" fill="#f2d888"/><rect x="1" y="3" width="13" height="1" fill="#b0a078"/><rect x="1" y="4" width="13" height="1" fill="#f2d27c"/><rect x="1" y="5" width="13" height="1" fill="#b0a070"/><rect x="1" y="6" width="13" height="1" fill="#ecbc58"/><rect x="1" y="7" width="13" height="1" fill="#b09850"/><rect x="1" y="8" width="13" height="1" fill="#ecb450"/><rect x="1" y="9" width="13" height="1" fill="#c88838"/><rect x="0" y="7" width="1" height="3" fill="#3838b0"/><rect x="14" y="2" width="1" height="3" fill="#2828a0"/></svg>
<div class="t" style="left:73px;top:617px">Tờ trình</div>
<div class="a" style="left:42px;top:640px;width:10px;height:0;border-top:1px dotted #888"></div>
<svg class="a" style="left:53px;top:635px" width="15" height="11" viewBox="0 0 15 11"><rect x="0" y="0" width="14" height="10" fill="#e8b040"/><rect x="1" y="1" width="6" height="1" fill="#c8b890"/><rect x="7" y="1" width="7" height="1" fill="#b88838"/><rect x="1" y="2" width="13" height="1" fill="#f2d888"/><rect x="1" y="3" width="13" height="1" fill="#b0a078"/><rect x="1" y="4" width="13" height="1" fill="#f2d27c"/><rect x="1" y="5" width="13" height="1" fill="#b0a070"/><rect x="1" y="6" width="13" height="1" fill="#ecbc58"/><rect x="1" y="7" width="13" height="1" fill="#b09850"/><rect x="1" y="8" width="13" height="1" fill="#ecb450"/><rect x="1" y="9" width="13" height="1" fill="#c88838"/><rect x="0" y="7" width="1" height="3" fill="#3838b0"/><rect x="14" y="2" width="1" height="3" fill="#2828a0"/></svg>
<div class="t" style="left:73px;top:633px">Thông tư</div>
<div class="a" style="left:42px;top:656px;width:10px;height:0;border-top:1px dotted #888"></div>
<svg class="a" style="left:53px;top:651px" width="15" height="11" viewBox="0 0 15 11"><rect x="0" y="0" width="14" height="10" fill="#e8b040"/><rect x="1" y="1" width="6" height="1" fill="#c8b890"/><rect x="7" y="1" width="7" height="1" fill="#b88838"/><rect x="1" y="2" width="13" height="1" fill="#f2d888"/><rect x="1" y="3" width="13" height="1" fill="#b0a078"/><rect x="1" y="4" width="13" height="1" fill="#f2d27c"/><rect x="1" y="5" width="13" height="1" fill="#b0a070"/><rect x="1" y="6" width="13" height="1" fill="#ecbc58"/><rect x="1" y="7" width="13" height="1" fill="#b09850"/><rect x="1" y="8" width="13" height="1" fill="#ecb450"/><rect x="1" y="9" width="13" height="1" fill="#c88838"/><rect x="0" y="7" width="1" height="3" fill="#3838b0"/><rect x="14" y="2" width="1" height="3" fill="#2828a0"/></svg>
<div class="t" style="left:73px;top:649px">Thông tư liên tịch</div>
<div class="a" style="left:250px;top:63px;width:984px;height:248px;background:#fff"></div>
<div class="a" style="left:250px;top:63px;width:967px;height:1px;background:#a0a0a0"></div>
<div class="a" style="left:250px;top:63px;width:1px;height:247px;background:#a0a0a0"></div>
<div class="a" style="left:301px;top:65px;width:1px;height:31px;background:#e3e3e3"></div>
<div class="a" style="left:387px;top:65px;width:1px;height:31px;background:#e3e3e3"></div>
<div class="a" style="left:449px;top:65px;width:1px;height:31px;background:#e3e3e3"></div>
<div class="t" style="left:260px;top:73px">Tên file</div>
<div class="t" style="left:309px;top:67.5px;line-height:13px">Số công<br>văn</div>
<div class="t" style="left:395px;top:67.5px;line-height:13px">Số<br>đến</div>
<div class="t" style="left:458px;top:73px">Trích yếu</div>
<div class="a" style="left:251px;top:63px;width:966px;height:248px;overflow:hidden">
<div class="gl" style="left:0;top:33px;width:966px;height:1px"></div>
<div class="a" style="left:0;top:34px;width:966px;height:21px;background:#0078d7"></div>
<div class="gl" style="left:0;top:55px;width:966px;height:1px"></div>
<div class="gl" style="left:50px;top:34px;width:1px;height:22px"></div>
<div class="gl" style="left:136px;top:34px;width:1px;height:22px"></div>
<div class="gl" style="left:198px;top:34px;width:1px;height:22px"></div>
<div class="t" style="left:54px;top:38px;color:#fff">571</div>
<div class="t" style="left:141px;top:38px;color:#fff">38</div>
<div class="t" style="left:202px;top:38px;color:#fff">V.v đề nghị tạm ứng HĐ tư vấn lập hồ sơ thiết kế và tổng dự toán xây dựng</div>
<div class="gl" style="left:0;top:77px;width:966px;height:1px"></div>
<div class="gl" style="left:50px;top:56px;width:1px;height:22px"></div>
<div class="gl" style="left:136px;top:56px;width:1px;height:22px"></div>
<div class="gl" style="left:198px;top:56px;width:1px;height:22px"></div>
<div class="t" style="left:54px;top:60px;color:#000">572</div>
<div class="t" style="left:141px;top:60px;color:#000">1152</div>
<div class="t" style="left:202px;top:60px;color:#000">V.v tạm dừng chuyển tài xăng daauftaij vịnh Lan Hạ</div>
<div class="gl" style="left:0;top:99px;width:966px;height:1px"></div>
<div class="gl" style="left:50px;top:78px;width:1px;height:22px"></div>
<div class="gl" style="left:136px;top:78px;width:1px;height:22px"></div>
<div class="gl" style="left:198px;top:78px;width:1px;height:22px"></div>
<div class="t" style="left:54px;top:82px;color:#000">563</div>
<div class="t" style="left:141px;top:82px;color:#000">1578</div>
<div class="t" style="left:202px;top:82px;color:#000">V.v thông tin tuyên truyền trên tạp chí Biển nhân ngày doanh nhân VN và kỷ niệm 38 năm ngày thành lập TCT</div>
<div class="gl" style="left:0;top:121px;width:966px;height:1px"></div>
<div class="gl" style="left:50px;top:100px;width:1px;height:22px"></div>
<div class="gl" style="left:136px;top:100px;width:1px;height:22px"></div>
<div class="gl" style="left:198px;top:100px;width:1px;height:22px"></div>
<div class="t" style="left:54px;top:104px;color:#000">567</div>
<div class="t" style="left:141px;top:104px;color:#000">1360</div>
<div class="t" style="left:202px;top:104px;color:#000">V.v đề nghị góp ý đối với công tác PCCC và xây dựng lực lượng cảnh sát PCCC TP.HP trong sạch, vững mạnh</div>
<div class="gl" style="left:0;top:143px;width:966px;height:1px"></div>
<div class="gl" style="left:50px;top:122px;width:1px;height:22px"></div>
<div class="gl" style="left:136px;top:122px;width:1px;height:22px"></div>
<div class="gl" style="left:198px;top:122px;width:1px;height:22px"></div>
<div class="t" style="left:54px;top:126px;color:#000">568</div>
<div class="t" style="left:141px;top:126px;color:#000">009</div>
<div class="t" style="left:202px;top:126px;color:#000">V.v xin giảm phí HT</div>
<div class="gl" style="left:0;top:165px;width:966px;height:1px"></div>
<div class="gl" style="left:50px;top:144px;width:1px;height:22px"></div>
<div class="gl" style="left:136px;top:144px;width:1px;height:22px"></div>
<div class="gl" style="left:198px;top:144px;width:1px;height:22px"></div>
<div class="t" style="left:54px;top:148px;color:#000">570</div>
<div class="t" style="left:141px;top:148px;color:#000">1169</div>
<div class="t" style="left:202px;top:148px;color:#000">kết luận của Chủ tịch HĐTV về kết quả đánh giá tình hình thực hiện nhiệm vụ sản xuất kinh doanh, chăm lo đời sống người lao động 6 tháng đầu năm 2013 tại 1</div>
<div class="gl" style="left:0;top:187px;width:966px;height:1px"></div>
<div class="gl" style="left:50px;top:166px;width:1px;height:22px"></div>
<div class="gl" style="left:136px;top:166px;width:1px;height:22px"></div>
<div class="gl" style="left:198px;top:166px;width:1px;height:22px"></div>
<div class="t" style="left:54px;top:170px;color:#000">560</div>
<div class="t" style="left:141px;top:170px;color:#000">1129</div>
<div class="t" style="left:202px;top:170px;color:#000">V.v gia hạn hoạt động nạo vét (Long Châu)</div>
<div class="gl" style="left:0;top:209px;width:966px;height:1px"></div>
<div class="gl" style="left:50px;top:188px;width:1px;height:22px"></div>
<div class="gl" style="left:136px;top:188px;width:1px;height:22px"></div>
<div class="gl" style="left:198px;top:188px;width:1px;height:22px"></div>
<div class="t" style="left:54px;top:192px;color:#000">561</div>
<div class="t" style="left:141px;top:192px;color:#000">497</div>
<div class="t" style="left:202px;top:192px;color:#000">V.v cử CB dự khóa tập huấn "Nâng cao năng lực sơ cấp cứu tại chỗ những tai nạn thường gặp trong Doanh nghiệp"</div>
<div class="gl" style="left:0;top:231px;width:966px;height:1px"></div>
<div class="gl" style="left:50px;top:210px;width:1px;height:22px"></div>
<div class="gl" style="left:136px;top:210px;width:1px;height:22px"></div>
<div class="gl" style="left:198px;top:210px;width:1px;height:22px"></div>
<div class="t" style="left:54px;top:214px;color:#000">1163</div>
<div class="t" style="left:141px;top:214px;color:#000">556</div>
<div class="t" style="left:202px;top:214px;color:#000">V.v tổ chức các hoạt động hưởng ứng chiến dịch làm cho thế giới sạch hơn năm 2013</div>
<div class="gl" style="left:0;top:253px;width:966px;height:1px"></div>
<div class="gl" style="left:50px;top:232px;width:1px;height:22px"></div>
<div class="gl" style="left:136px;top:232px;width:1px;height:22px"></div>
<div class="gl" style="left:198px;top:232px;width:1px;height:22px"></div>
<div class="t" style="left:54px;top:236px;color:#000">1126</div>
<div class="t" style="left:141px;top:236px;color:#000">557</div>
<div class="t" style="left:202px;top:236px;color:#000">Về khu vực hạn chế hoạt động hàng hải</div>
</div>
<div class="a" style="left:1217px;top:63px;width:17px;height:248px;background:#f0f0f0"></div>
<div class="a" style="left:1218px;top:80px;width:15px;height:22px;background:#cdcdcd"></div>
<svg class="a" style="left:1221px;top:68px" width="9" height="8" viewBox="0 0 9 8"><path d="M1 6 L4.5 2.5 L8 6" stroke="#505050" stroke-width="2" fill="none"/></svg>
<svg class="a" style="left:1221px;top:297px" width="9" height="8" viewBox="0 0 9 8"><path d="M1 2 L4.5 5.5 L8 2" stroke="#505050" stroke-width="2" fill="none"/></svg>
<div class="a" style="left:251px;top:311px;width:966px;height:16px;background:#f0f0f0"></div>
<div class="a" style="left:267px;top:311px;width:444px;height:15px;background:#cdcdcd"></div>
<svg class="a" style="left:254px;top:314px" width="8" height="9" viewBox="0 0 8 9"><path d="M6 1 L2.5 4.5 L6 8" stroke="#505050" stroke-width="2" fill="none"/></svg>
<svg class="a" style="left:1205px;top:314px" width="8" height="9" viewBox="0 0 8 9"><path d="M2 1 L5.5 4.5 L2 8" stroke="#505050" stroke-width="2" fill="none"/></svg>
<div class="t" style="left:259px;top:338px;">Ngày</div>
<div class="inp" style="left:307px;top:335px;width:86px;height:20px"></div>
<div class="t" style="left:310px;top:338px;width:66px;overflow:hidden">11/09/2013</div>
<svg class="a" style="left:379px;top:343px" width="10" height="6" viewBox="0 0 10 6"><path d="M0.5 0.5 L5 5 L9.5 0.5" stroke="#606060" stroke-width="1.1" fill="none"/></svg>
<div class="t" style="left:405px;top:338px;">Nhân viên nhận(gửi)</div>
<div class="inp" style="left:510px;top:335px;width:100px;height:21px"></div>
<svg class="a" style="left:596px;top:343px" width="10" height="6" viewBox="0 0 10 6"><path d="M0.5 0.5 L5 5 L9.5 0.5" stroke="#606060" stroke-width="1.1" fill="none"/></svg>
<div class="t" style="left:622px;top:338px;">Số CV</div>
<div class="inp" style="left:659px;top:335px;width:48px;height:20px"></div>
<div class="t" style="left:662px;top:338px;">571</div>
<div class="t" style="left:712px;top:338px;">Số đến</div>
<div class="inp" style="left:752px;top:335px;width:57px;height:20px"></div>
<div class="t" style="left:755px;top:338px;">38</div>
<div class="t" style="left:259px;top:360px;">Loại công văn</div>
<div class="t" style="left:405px;top:360px;">Lĩnh vực</div>
<div class="t" style="left:622px;top:360px;">Cơ quan ban hành</div>
<div class="inp" style="left:256px;top:377px;width:137px;height:21px"></div>
<div class="t" style="left:259px;top:380px;width:117px;overflow:hidden">Công văn</div>
<svg class="a" style="left:379px;top:385px" width="10" height="6" viewBox="0 0 10 6"><path d="M0.5 0.5 L5 5 L9.5 0.5" stroke="#606060" stroke-width="1.1" fill="none"/></svg>
<div class="inp" style="left:405px;top:377px;width:205px;height:21px"></div>
<div class="t" style="left:408px;top:380px;width:185px;overflow:hidden">Chương trình, dự án</div>
<svg class="a" style="left:596px;top:385px" width="10" height="6" viewBox="0 0 10 6"><path d="M0.5 0.5 L5 5 L9.5 0.5" stroke="#606060" stroke-width="1.1" fill="none"/></svg>
<div class="inp" style="left:620px;top:377px;width:161px;height:21px"></div>
<div class="t" style="left:623px;top:380px;width:141px;overflow:hidden">CTCP tư vấn thiết kế CTXD Hải Phòng</div>
<svg class="a" style="left:767px;top:385px" width="10" height="6" viewBox="0 0 10 6"><path d="M0.5 0.5 L5 5 L9.5 0.5" stroke="#606060" stroke-width="1.1" fill="none"/></svg>
<div class="t" style="left:259px;top:406px;">Chiều công văn:</div>
<div class="rad on" style="left:342px;top:406px"></div>
<div class="t" style="left:361px;top:406px;">Đến</div>
<div class="rad" style="left:398px;top:406px"></div>
<div class="t" style="left:417px;top:406px;">Đi</div>
<div class="rad" style="left:439px;top:406px"></div>
<div class="t" style="left:458px;top:406px;">Công văn nội bộ</div>
<div class="t" style="left:548px;top:406px;">Đính kèm</div>
<div class="a" style="left:620px;top:402px;width:161px;height:20px;background:#fff;border:1px solid #7c8698"></div>
<svg class="a" style="left:624px;top:404px" width="12" height="15" viewBox="0 0 12 15"><path d="M0.5 0.5 H8 L11.5 4 V14.5 H0.5 Z" fill="#f8f8f8" stroke="#b0b0b0"/><path d="M8 0.5 V4 H11.5" fill="none" stroke="#b0b0b0"/></svg>
<div class="btn" style="left:785px;top:403px;width:23px;height:18px;background:#e1e1e1"></div>
<div class="t" style="left:792px;top:406px;">...</div>
<div class="t" style="left:260px;top:430px;">Trích yếu nội dung:</div>
<div class="t" style="left:548px;top:430px;">Chuyển tiếp</div>
<div class="inp" style="left:620px;top:426px;width:161px;height:21px"></div>
<div class="t" style="left:623px;top:429px;width:141px;overflow:hidden">P.KHTH</div>
<svg class="a" style="left:767px;top:434px" width="10" height="6" viewBox="0 0 10 6"><path d="M0.5 0.5 L5 5 L9.5 0.5" stroke="#606060" stroke-width="1.1" fill="none"/></svg>
<div class="inp" style="left:256px;top:450px;width:565px;height:67px"></div>
<div class="t" style="left:259px;top:453px;">V.v đề nghị tạm ứng HĐ tư vấn lập hồ sơ thiết kế và tổng dự toán xây dựng</div>
<div class="t" style="left:259px;top:525px;">Ghi chú bổ xung</div>
<div class="inp" style="left:347px;top:522px;width:474px;height:21px"></div>
<div class="btn" style="left:348px;top:548px;width:63px;height:31px;background:#e1e1e1;border-color:#adadad"></div>
<svg class="a" style="left:351px;top:554px" width="18" height="18" viewBox="0 0 18 18"><path d="M9 2 V16 M2 9 H16" stroke="#2f6fd8" stroke-width="4.6" stroke-linecap="round"/><path d="M9 3 V15 M3 9 H15" stroke="#4a90ee" stroke-width="2.6" stroke-linecap="round"/></svg>
<div class="t" style="left:371px;top:557px;color:#000"><u>T</u>hêm</div>
<div class="btn" style="left:419px;top:548px;width:98px;height:31px;background:#e1e1e1;border-color:#adadad"></div>
<svg class="a" style="left:423px;top:553px" width="19" height="20" viewBox="0 0 19 20"><rect x="5" y="0.5" width="9" height="7" rx="1" fill="#fafafa" stroke="#9a9a9a" stroke-width="0.8"/><path d="M1 9 Q1 6.5 3.5 6.5 H15.5 Q18 6.5 18 9 V15 H1 Z" fill="#b8b8b8"/><path d="M1 11 H18 V15 H1 Z" fill="#3c3c3c"/><path d="M2 7.5 H17" stroke="#e8e8e8"/><rect x="4.5" y="12.5" width="10" height="7" fill="#e0e0e0" stroke="#8a8a8a" stroke-width="0.6"/><rect x="6" y="14" width="7" height="4" fill="#2a90c8"/><rect x="7" y="15" width="3" height="2" fill="#40b060"/></svg>
<div class="t" style="left:444px;top:557px;color:#000"><u>I</u>n danh sách</div>
<div class="btn" style="left:524px;top:548px;width:77px;height:31px;background:#e1e1e1;border-color:#adadad"></div>
<svg class="a" style="left:528px;top:553px" width="16" height="19" viewBox="0 0 16 19"><ellipse cx="8" cy="17.5" rx="7" ry="1" fill="#d0d0d0"/><path d="M11 2 L14 4.5 L5 15 L2 16.5 L2.5 13 Z" fill="#f2c230" stroke="#c89010" stroke-width="0.6"/><path d="M11 2 L14 4.5 L15 3.2 L12 0.8 Z" fill="#c0282c"/><path d="M2 16.5 L2.5 13 L4 14.8 Z" fill="#333"/></svg>
<div class="t" style="left:549px;top:557px;color:#000"><u>C</u>ập nhật</div>
<div class="btn" style="left:609px;top:548px;width:66px;height:31px;background:#cccccc;border-color:#bfbfbf"></div>
<svg class="a" style="left:612px;top:553px" width="18" height="18" viewBox="0 0 18 18"><path d="M1 2 Q1 1 2 1 H15 L17 3 V16 Q17 17 16 17 H2 Q1 17 1 16 Z" fill="#a8a8a8"/><rect x="4" y="1.5" width="8" height="5" fill="#e4e4e4"/><rect x="9" y="2.5" width="2" height="3" fill="#a8a8a8"/><rect x="3.5" y="9" width="11" height="7" fill="#e8e8e8"/><path d="M4 11 H14 M4 13 H14" stroke="#c0c0c0" stroke-width="0.7"/></svg>
<div class="t" style="left:641px;top:557px;color:#a0a0a0"><u>G</u>hi</div>
<div class="btn" style="left:683px;top:548px;width:63px;height:31px;background:#e1e1e1;border-color:#adadad"></div>
<svg class="a" style="left:687px;top:555px" width="17" height="16" viewBox="0 0 17 16"><path d="M2 3 Q6 5 9 8 Q12 11 13 15" stroke="#d8141c" stroke-width="2.2" fill="none" stroke-linecap="round"/><path d="M16 1 Q10 4 7 8 Q4 12 3 15" stroke="#d8141c" stroke-width="2.4" fill="none" stroke-linecap="round"/></svg>
<div class="t" style="left:715px;top:557px;color:#000"><u>X</u>óa</div>
<div class="btn" style="left:754px;top:548px;width:67px;height:31px;background:#e1e1e1;border-color:#adadad"></div>
<svg class="a" style="left:757px;top:555px" width="17" height="17" viewBox="0 0 17 17"><rect x="0.5" y="0.5" width="16" height="16" rx="1.5" fill="#f0f0f0" stroke="#a0a0a0"/><rect x="2" y="2" width="13" height="13" fill="#e0141c"/><rect x="2" y="2" width="13" height="6" fill="#f04a50"/><path d="M5.5 5.5 L11.5 11.5 M11.5 5.5 L5.5 11.5" stroke="#fff" stroke-width="2.2"/></svg>
<div class="t" style="left:781px;top:557px;color:#000">Đóng</div>
<div class="a" style="left:8px;top:869px;width:1226px;height:1px;background:#fff"></div>
<div class="a" style="left:8px;top:870px;width:1226px;height:1px;background:#6d9bd2"></div>
<div class="a" style="left:8px;top:871px;width:1226px;height:20px;background:linear-gradient(#c6e2fb 0,#b2d6f9 30%,#9ec8f1 32%,#a6ccf2 100%)"></div>
<div class="a" style="left:8px;top:889px;width:1226px;height:1px;background:#d8ebfb"></div>
<div class="a" style="left:8px;top:891px;width:1226px;height:1px;background:#6d9bd2"></div>
<div class="a" style="left:8px;top:892px;width:1226px;height:1px;background:#a8c8ec"></div>
<div class="a" style="left:8px;top:893px;width:1226px;height:1px;background:#e2eefa"></div>
<div class="a" style="left:8px;top:871px;width:60px;height:18px;overflow:hidden"><div class="t" style="left:-23.5px;top:1px;color:#3c55a0;letter-spacing:-0.08px;direction:ltr">phương tiện bộ</div></div>
<svg class="a" style="left:57.8px;top:870px" width="22" height="22" viewBox="0 0 22 22"><path d="M16 1 C11 6 9 14 3 19.5 L0 19.5" stroke="#f2f8fe" stroke-width="1.2" fill="none"/><path d="M22 1 L16 1 C12 6 9 12 9.5 16 C10 19 12 19.5 14 19.5 L22 19.5" stroke="#6d9bd2" stroke-width="1" fill="none"/></svg>
<svg class="a" style="left:70px;top:874px" width="12" height="12" viewBox="0 0 12 12"><circle cx="6" cy="6" r="5.6" fill="#5f7ea8"/><circle cx="6" cy="6" r="4.6" fill="#6c8ab2"/><path d="M3.6 3.6 L8.4 8.4 M8.4 3.6 L3.6 8.4" stroke="#fff" stroke-width="1.9"/></svg>
<div class="t" style="left:85.5px;top:872px;color:#3c55a0;letter-spacing:-0.08px">Công việc hàng ngày - phương tiện bộ</div>
<svg class="a" style="left:269.2px;top:870px" width="22" height="22" viewBox="0 0 22 22"><path d="M16 1 C11 6 9 14 3 19.5 L0 19.5" stroke="#f2f8fe" stroke-width="1.2" fill="none"/><path d="M22 1 L16 1 C12 6 9 12 9.5 16 C10 19 12 19.5 14 19.5 L22 19.5" stroke="#6d9bd2" stroke-width="1" fill="none"/></svg>
<svg class="a" style="left:281px;top:874px" width="12" height="12" viewBox="0 0 12 12"><circle cx="6" cy="6" r="5.6" fill="#5f7ea8"/><circle cx="6" cy="6" r="4.6" fill="#6c8ab2"/><path d="M3.6 3.6 L8.4 8.4 M8.4 3.6 L3.6 8.4" stroke="#fff" stroke-width="1.9"/></svg>
<div class="t" style="left:297.2px;top:872px;color:#3c55a0;letter-spacing:-0.04px">Chi Phí Nhiên Liệu</div>
<svg class="a" style="left:386.5px;top:870px" width="22" height="22" viewBox="0 0 22 22"><path d="M16 1 C11 6 9 14 3 19.5 L0 19.5" stroke="#f2f8fe" stroke-width="1.2" fill="none"/><path d="M22 1 L16 1 C12 6 9 12 9.5 16 C10 19 12 19.5 14 19.5 L22 19.5" stroke="#6d9bd2" stroke-width="1" fill="none"/></svg>
<svg class="a" style="left:398px;top:874px" width="12" height="12" viewBox="0 0 12 12"><circle cx="6" cy="6" r="5.6" fill="#5f7ea8"/><circle cx="6" cy="6" r="4.6" fill="#6c8ab2"/><path d="M3.6 3.6 L8.4 8.4 M8.4 3.6 L3.6 8.4" stroke="#fff" stroke-width="1.9"/></svg>
<div class="t" style="left:414.2px;top:872px;color:#3c55a0;letter-spacing:-0.11px">Tổng Hợp Tiền Lương Công Ty</div>
<svg class="a" style="left:563.3px;top:870px" width="22" height="22" viewBox="0 0 22 22"><path d="M16 1 C11 6 9 14 3 19.5 L0 19.5" stroke="#f2f8fe" stroke-width="1.2" fill="none"/><path d="M22 1 L16 1 C12 6 9 12 9.5 16 C10 19 12 19.5 14 19.5 L22 19.5" stroke="#6d9bd2" stroke-width="1" fill="none"/></svg>
<svg class="a" style="left:575px;top:874px" width="12" height="12" viewBox="0 0 12 12"><circle cx="6" cy="6" r="5.6" fill="#5f7ea8"/><circle cx="6" cy="6" r="4.6" fill="#6c8ab2"/><path d="M3.6 3.6 L8.4 8.4 M8.4 3.6 L3.6 8.4" stroke="#fff" stroke-width="1.9"/></svg>
<div class="t" style="left:592.6px;top:872px;color:#3c55a0;letter-spacing:-0.27px">Bảng Tính Lương Văn Phòng</div>
<svg class="a" style="left:730.5px;top:870px" width="22" height="22" viewBox="0 0 22 22"><path d="M16 1 C11 6 9 14 3 19.5 L0 19.5" stroke="#f2f8fe" stroke-width="1.2" fill="none"/><path d="M22 1 L16 1 C12 6 9 12 9.5 16 C10 19 12 19.5 14 19.5 L22 19.5" stroke="#6d9bd2" stroke-width="1" fill="none"/></svg>
<svg class="a" style="left:742px;top:874px" width="12" height="12" viewBox="0 0 12 12"><circle cx="6" cy="6" r="5.6" fill="#5f7ea8"/><circle cx="6" cy="6" r="4.6" fill="#6c8ab2"/><path d="M3.6 3.6 L8.4 8.4 M8.4 3.6 L3.6 8.4" stroke="#fff" stroke-width="1.9"/></svg>
<div class="t" style="left:759.8px;top:872px;color:#3c55a0;letter-spacing:-0.27px">Bảng Tính Lương Phương Tiện</div>
<svg class="a" style="left:905.5px;top:870px" width="22" height="22" viewBox="0 0 22 22"><path d="M16 1 C11 6 9 14 3 19.5 L0 19.5" stroke="#f2f8fe" stroke-width="1.2" fill="none"/><path d="M22 1 L16 1 C12 6 9 12 9.5 16 C10 19 12 19.5 14 19.5 L22 19.5" stroke="#6d9bd2" stroke-width="1" fill="none"/></svg>
<svg class="a" style="left:918px;top:874px" width="12" height="12" viewBox="0 0 12 12"><circle cx="6" cy="6" r="5.6" fill="#5f7ea8"/><circle cx="6" cy="6" r="4.6" fill="#6c8ab2"/><path d="M3.6 3.6 L8.4 8.4 M8.4 3.6 L3.6 8.4" stroke="#fff" stroke-width="1.9"/></svg>
<div class="t" style="left:934px;top:872px;color:#3c55a0;letter-spacing:-0.18px">Bảng Tính Lương Hoa Tiêu</div>
<div class="a" style="left:1071px;top:869px;width:123px;height:1px;background:#fff"></div>
<svg class="a" style="left:1070px;top:869px" width="164" height="23" viewBox="0 0 164 23"><defs><linearGradient id="og" x1="0" y1="0" x2="0" y2="1"><stop offset="0" stop-color="#ecd2c0"/><stop offset="0.45" stop-color="#f5b070"/><stop offset="0.55" stop-color="#f6a24c"/><stop offset="1" stop-color="#fbe4c8"/></linearGradient></defs><path d="M0 1 L125 1 C118 8 114 16 108 21 L6 21 C2 21 1 19 1 16 Z" fill="url(#og)"/><path d="M125 1 C118 8 114 16 108 21" stroke="#9bb4d0" stroke-width="1" fill="none"/><path d="M125 1 L164 1 L164 22 L108 22 C114 16 118 8 125 1 Z" fill="#c4dff7"/><path d="M125 1 L164 1" stroke="#6d9bd2" stroke-width="1"/></svg>
<div class="a" style="left:1070px;top:891px;width:164px;height:1px;background:#6d9bd2"></div>
<svg class="a" style="left:1075px;top:874px" width="12" height="12" viewBox="0 0 12 12"><circle cx="6" cy="6" r="5.6" fill="#5f7ea8"/><circle cx="6" cy="6" r="4.6" fill="#6c8ab2"/><path d="M3.6 3.6 L8.4 8.4 M8.4 3.6 L3.6 8.4" stroke="#fff" stroke-width="1.9"/></svg>
<div class="t" style="left:1091.9px;top:872px;font-weight:bold;color:#1b2a6e;letter-spacing:-0.25px">Quản lý công văn</div>
<svg class="a" style="left:1208px;top:875px" width="22" height="10" viewBox="0 0 22 10"><path d="M6 0 L0.5 5 L6 10 Z" fill="#3f78c8"/><path d="M15 0 L20.5 5 L15 10 Z" fill="#3f78c8"/></svg>
<div class="a" style="left:8px;top:894px;width:1227px;height:26px;background:linear-gradient(#cde2f6,#bcd6f0 45%,#a4c4e4 100%)"></div>
<div class="a" style="left:119px;top:899px;width:1px;height:18px;background:#8eb0d8;box-shadow:1px 0 0 #e6f1fb"></div>
<div class="a" style="left:195px;top:899px;width:1px;height:18px;background:#8eb0d8;box-shadow:1px 0 0 #e6f1fb"></div>
<div class="a" style="left:253px;top:899px;width:1px;height:18px;background:#8eb0d8;box-shadow:1px 0 0 #e6f1fb"></div>
<div class="a" style="left:387px;top:899px;width:1px;height:18px;background:#8eb0d8;box-shadow:1px 0 0 #e6f1fb"></div>
<div class="t" style="left:33px;top:900px;font-weight:bold;color:#0e3448">.</div>
<svg class="a" style="left:36px;top:901px" width="7" height="13" viewBox="0 0 7 13"><path d="M1.2 0.8 L5.8 12.2" stroke="#0e3448" stroke-width="1.9"/></svg>
<div class="t" style="left:42.3px;top:900px;font-weight:bold;color:#0e3448;letter-spacing:-0.2px">SQLEXPRESS</div>
<div class="t" style="left:145.5px;top:900px;font-weight:bold;color:#0e3448;letter-spacing:0.25px">pilotco2</div>
<div class="t" style="left:220.4px;top:900px;font-weight:bold;color:#0e3448;color:#1a2a40;letter-spacing:-0.3px">Long</div>
<div class="t" style="left:278.5px;top:900px;font-weight:bold;color:#0e3448;letter-spacing:0;transform:scaleX(1.186);transform-origin:0 0">12:37 11/08/2017</div>
<div class="t" style="left:388.5px;top:900px;font-weight:bold;color:#1c2a6c;letter-spacing:-0.33px">Bạn có 0 tin nhắn mới</div>
<svg class="a" style="left:13px;top:898px" width="18" height="18" viewBox="0 0 18 18"><defs><linearGradient id="scr" x1="0" y1="0" x2="1" y2="1"><stop offset="0" stop-color="#5ab0e8"/><stop offset="0.5" stop-color="#1e5aa0"/><stop offset="1" stop-color="#0e3a78"/></linearGradient></defs><rect x="0.5" y="0.5" width="12.5" height="10" rx="0.8" fill="#f0f0f0" stroke="#c8c8c8" stroke-width="0.6"/><rect x="1.5" y="1.5" width="10.5" height="7.5" fill="url(#scr)"/><rect x="2" y="2.3" width="1" height="1" fill="#fff"/><rect x="2" y="4.3" width="1" height="1" fill="#fff"/><rect x="2" y="6.3" width="1" height="1" fill="#fff"/><rect x="5" y="11" width="3" height="1.5" fill="#222"/><rect x="0.5" y="12.5" width="12" height="3.2" rx="0.5" fill="#e4e4e4" stroke="#b0b0b0" stroke-width="0.5"/><rect x="13.5" y="3.5" width="2.5" height="3" fill="#f4f4f4"/><path d="M13.2 6.5 L16.8 6.5 L16.2 12 L14.5 16.5 L14 12 Z" fill="#f5b020"/><path d="M14 7 L15.5 7 L15 10.5 L14.2 12" fill="#ffe060"/></svg>
<svg class="a" style="left:125px;top:898px" width="18" height="18" viewBox="0 0 18 18"><circle cx="11" cy="7" r="6.5" fill="#9fd0f0" stroke="#7a8a98" stroke-width="0.8"/><circle cx="7" cy="11" r="6.5" fill="#7cc0ec" stroke="#7a8a98" stroke-width="0.8"/><circle cx="7" cy="11" r="2" fill="#e0e8ee"/><circle cx="7" cy="11" r="0.9" fill="#5a9ac8"/></svg>
<svg class="a" style="left:203px;top:898px" width="13" height="16" viewBox="0 0 13 16"><circle cx="6.5" cy="4.5" r="3.8" fill="#5ab2f0"/><path d="M0.5 15.5 Q0.5 8.5 6.5 8.5 Q12.5 8.5 12.5 15.5 Z" fill="#4aa6ec"/></svg>
<svg class="a" style="left:259px;top:898px" width="17" height="18" viewBox="0 0 17 18"><circle cx="8.5" cy="9" r="7" fill="#fff" stroke="#3a8ad0" stroke-width="1.8"/><path d="M2 3 L4 1 M15 3 L13 1" stroke="#7ac0f0" stroke-width="2"/><path d="M4 17 L6 15 M13 17 L11 15" stroke="#3a70b0" stroke-width="1.6"/><path d="M8.5 9 L5 7 M8.5 9 L13 8.5" stroke="#333" stroke-width="0.9"/><path d="M8.5 9 L12 11" stroke="#e33" stroke-width="0.7"/></svg>
</body></html>
